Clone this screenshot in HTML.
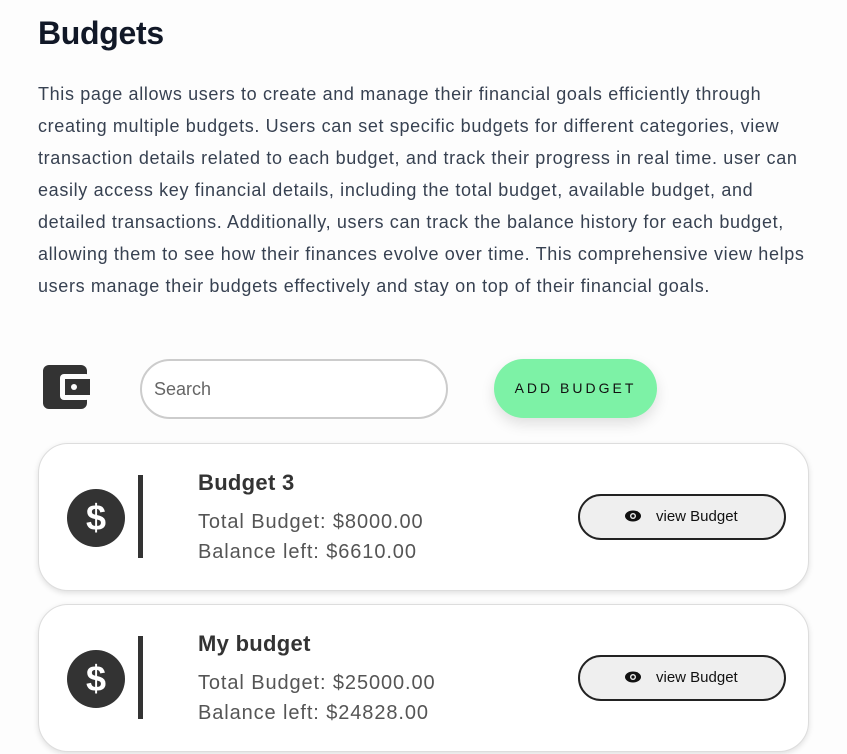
<!DOCTYPE html>
<html><head><meta charset="utf-8"><style>
body{margin:0;background:#fdfdfd;font-family:"Liberation Sans",sans-serif;width:847px;height:754px;overflow:hidden;position:relative;color:#333}
h1{position:absolute;left:38px;top:15px;margin:0;font-size:32px;font-weight:bold;color:#111827;letter-spacing:-0.3px}
.p{position:absolute;left:38px;top:78px;font-size:18px;line-height:32px;color:#374151;white-space:nowrap}
.p div{letter-spacing:0.65px}
.abs{position:absolute}
.search{left:140px;top:359px;width:304px;height:56px;border:2px solid #ccc;border-radius:30px;background:#fff;font-size:18px;color:#666;line-height:56px;box-sizing:content-box}
.search span{margin-left:12px}
.add{left:494px;top:359px;width:163px;height:59px;border-radius:30px;background:#7df2a6;box-shadow:0 6px 14px rgba(0,0,0,.12);font-size:14px;letter-spacing:3px;text-align:center;line-height:59px;color:#111}
.card{left:38px;width:769px;height:146px;border:1px solid #ddd;border-radius:30px;background:#fff;box-shadow:0 2px 6px rgba(0,0,0,.12)}
.circ{left:28px;top:45px;width:58px;height:58px;border-radius:50%;background:#333;color:#fff;font-weight:bold;font-size:36px;text-align:center;line-height:58px}
.bar{left:99px;top:31px;width:5px;height:83px;background:#333}
.t{left:159px;top:26px;font-size:22px;font-weight:bold;color:#333;letter-spacing:0.3px}
.l{left:159px;font-size:20px;color:#555;letter-spacing:0.9px}
.vb{left:539px;top:50px;width:204px;height:42px;border:2px solid #222;border-radius:23px;background:#efefef;font-size:15px;color:#111;line-height:42px}
</style></head><body>
<h1>Budgets</h1>
<div class="p">
<div>This page allows users to create and manage their financial goals efficiently through</div>
<div>creating multiple budgets. Users can set specific budgets for different categories, view</div>
<div>transaction details related to each budget, and track their progress in real time. user can</div>
<div>easily access key financial details, including the total budget, available budget, and</div>
<div>detailed transactions. Additionally, users can track the balance history for each budget,</div>
<div>allowing them to see how their finances evolve over time. This comprehensive view helps</div>
<div>users manage their budgets effectively and stay on top of their financial goals.</div>
</div>
<svg class="abs" style="left:43px;top:365px" width="47" height="44" viewBox="0 0 47 44"><rect x="0" y="0" width="44" height="44" rx="6" fill="#333"/><rect x="17" y="9" width="30" height="26" rx="4" fill="#fdfdfd"/><rect x="22" y="14" width="25" height="16" fill="#333"/><circle cx="31" cy="22" r="3" fill="#fdfdfd"/></svg>
<div class="abs search"><span>Search</span></div>
<div class="abs add">ADD BUDGET</div>

<div class="abs card" style="top:443px">
<div class="abs circ">$</div><div class="abs bar"></div>
<div class="abs t">Budget 3</div>
<div class="abs l" style="top:67px">Total Budget: $8000.00</div>
<div class="abs l" style="top:97px">Balance left: $6610.00</div>
<div class="abs vb"><svg class="abs" style="left:45px;top:14px" width="16" height="12" viewBox="0 0 16 12"><ellipse cx="8" cy="6" rx="8" ry="5.5" fill="#111"/><circle cx="8" cy="6" r="3" fill="#efefef"/><circle cx="8" cy="6" r="1.6" fill="#111"/></svg><span class="abs" style="left:76px">view Budget</span></div>
</div>

<div class="abs card" style="top:604px">
<div class="abs circ">$</div><div class="abs bar"></div>
<div class="abs t">My budget</div>
<div class="abs l" style="top:67px">Total Budget: $25000.00</div>
<div class="abs l" style="top:97px">Balance left: $24828.00</div>
<div class="abs vb"><svg class="abs" style="left:45px;top:14px" width="16" height="12" viewBox="0 0 16 12"><ellipse cx="8" cy="6" rx="8" ry="5.5" fill="#111"/><circle cx="8" cy="6" r="3" fill="#efefef"/><circle cx="8" cy="6" r="1.6" fill="#111"/></svg><span class="abs" style="left:76px">view Budget</span></div>
</div>
</body></html>
